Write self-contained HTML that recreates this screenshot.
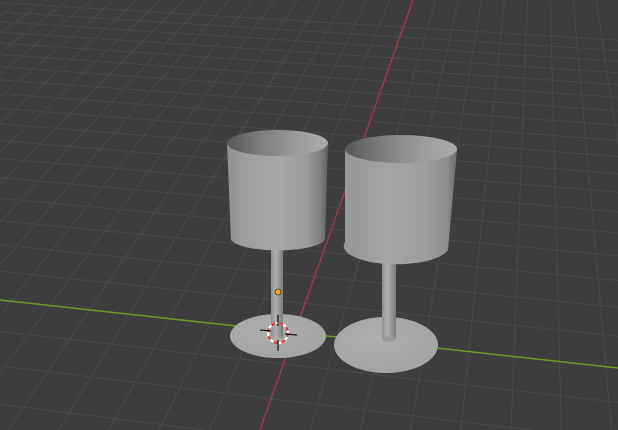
<!DOCTYPE html>
<html><head><meta charset="utf-8"><style>
html,body{margin:0;padding:0;background:#3d3d3d;overflow:hidden;width:618px;height:430px}
svg{display:block;position:absolute;left:0;top:0;overflow:hidden}
</style></head><body>
<svg id="s" width="618" height="430" viewBox="0 0 618 430" xmlns="http://www.w3.org/2000/svg">
<defs>
<linearGradient id="cup" x1="0" x2="1" y1="0" y2="0">
<stop offset="0" stop-color="#8f9090"/><stop offset="0.15" stop-color="#9c9d9d"/>
<stop offset="0.5" stop-color="#a6a7a7"/><stop offset="0.8" stop-color="#9a9b9b"/>
<stop offset="0.93" stop-color="#7c7d7d"/><stop offset="1" stop-color="#5e5f5f"/>
</linearGradient>
<linearGradient id="cup2" x1="0" x2="1" y1="0" y2="0">
<stop offset="0" stop-color="#959696"/><stop offset="0.4" stop-color="#a4a5a5"/>
<stop offset="0.75" stop-color="#9c9d9d"/><stop offset="0.92" stop-color="#8a8b8b"/>
<stop offset="1" stop-color="#6a6b6b"/>
</linearGradient>
<linearGradient id="inner" x1="0" x2="1" y1="0" y2="0">
<stop offset="0" stop-color="#555656"/><stop offset="0.3" stop-color="#7a7b7b"/>
<stop offset="0.7" stop-color="#9c9d9d"/><stop offset="1" stop-color="#a9aaaa"/>
</linearGradient>
<linearGradient id="stem" x1="0" x2="1" y1="0" y2="0">
<stop offset="0" stop-color="#8e8f8f"/><stop offset="0.4" stop-color="#aeafaf"/><stop offset="1" stop-color="#7a7b7b"/>
</linearGradient>
<radialGradient id="base" cx="0.4" cy="0.4" r="0.7">
<stop offset="0" stop-color="#adaeae"/><stop offset="1" stop-color="#a2a3a3"/>
</radialGradient>
</defs>
<g id="grid" stroke="#4b4b4b" stroke-width="1"></g>
<line x1="0" y1="300" x2="618" y2="368" stroke="#6a9a2a" stroke-width="1.5"/>
<line x1="413" y1="0" x2="260" y2="430" stroke="#a23c46" stroke-width="1.3"/>

<ellipse cx="278" cy="336" rx="48" ry="22" fill="url(#base)"/>
<rect x="271" y="240" width="12" height="98" fill="url(#stem)"/>
<path d="M227 143 L231 240 A48 13 0 0 0 325 240 L328 143 Z" fill="url(#cup)"/>
<ellipse cx="277.5" cy="143" rx="50.5" ry="13" fill="url(#inner)"/>
<ellipse cx="386" cy="345" rx="52" ry="28" fill="url(#base)"/>
<rect x="382" y="250" width="14" height="90" fill="url(#stem)"/>
<ellipse cx="389" cy="339" rx="7" ry="3" fill="#9a9b9b"/>
<path d="M345 148 L345 242 A52 18 0 0 0 448 250 L457 150 Z" fill="url(#cup2)"/>
<ellipse cx="401" cy="149" rx="56" ry="14" fill="url(#inner)"/>

<circle cx="278" cy="333" r="10" fill="none" stroke="#fff" stroke-width="2"/>
<circle cx="278" cy="333" r="10" fill="none" stroke="#e03030" stroke-width="2" stroke-dasharray="4 4"/>
<g stroke="#111" stroke-width="1.2">
<line x1="278" y1="315" x2="278" y2="326"/><line x1="278" y1="340" x2="278" y2="351"/>
<line x1="260" y1="330" x2="271" y2="331"/><line x1="285" y1="334" x2="297" y2="335"/>
</g>
<circle cx="278" cy="292" r="3" fill="#f5a623" stroke="#222" stroke-width="0.6"/>
</svg>
<script>
(function(){
var g=document.getElementById('grid'),ns='http://www.w3.org/2000/svg';
function L(x1,y1,x2,y2){var l=document.createElementNS(ns,'line');l.setAttribute('x1',x1);l.setAttribute('y1',y1);l.setAttribute('x2',x2);l.setAttribute('y2',y2);g.appendChild(l);}
var H=-361,F=14560,z0=22.03,VAx=-6009;
for(var n=-5;n<=40;n++){var z=z0+n;if(z<=0)continue;var y=H+F/z;if(y<-5)continue;
 var s=(y-H)/(0-VAx);L(0,y,618,y+s*618);}
var VBx=541,VBy=-361;
for(var k=-30;k<=30;k++){var x=306+42*k;
 var t=(430-VBy)/(300-VBy);var xb=VBx+(x-VBx)*t;L(VBx+(x-VBx)*((0-VBy)/(300-VBy)),0,xb,430);}
})();
</script>
</body></html>
